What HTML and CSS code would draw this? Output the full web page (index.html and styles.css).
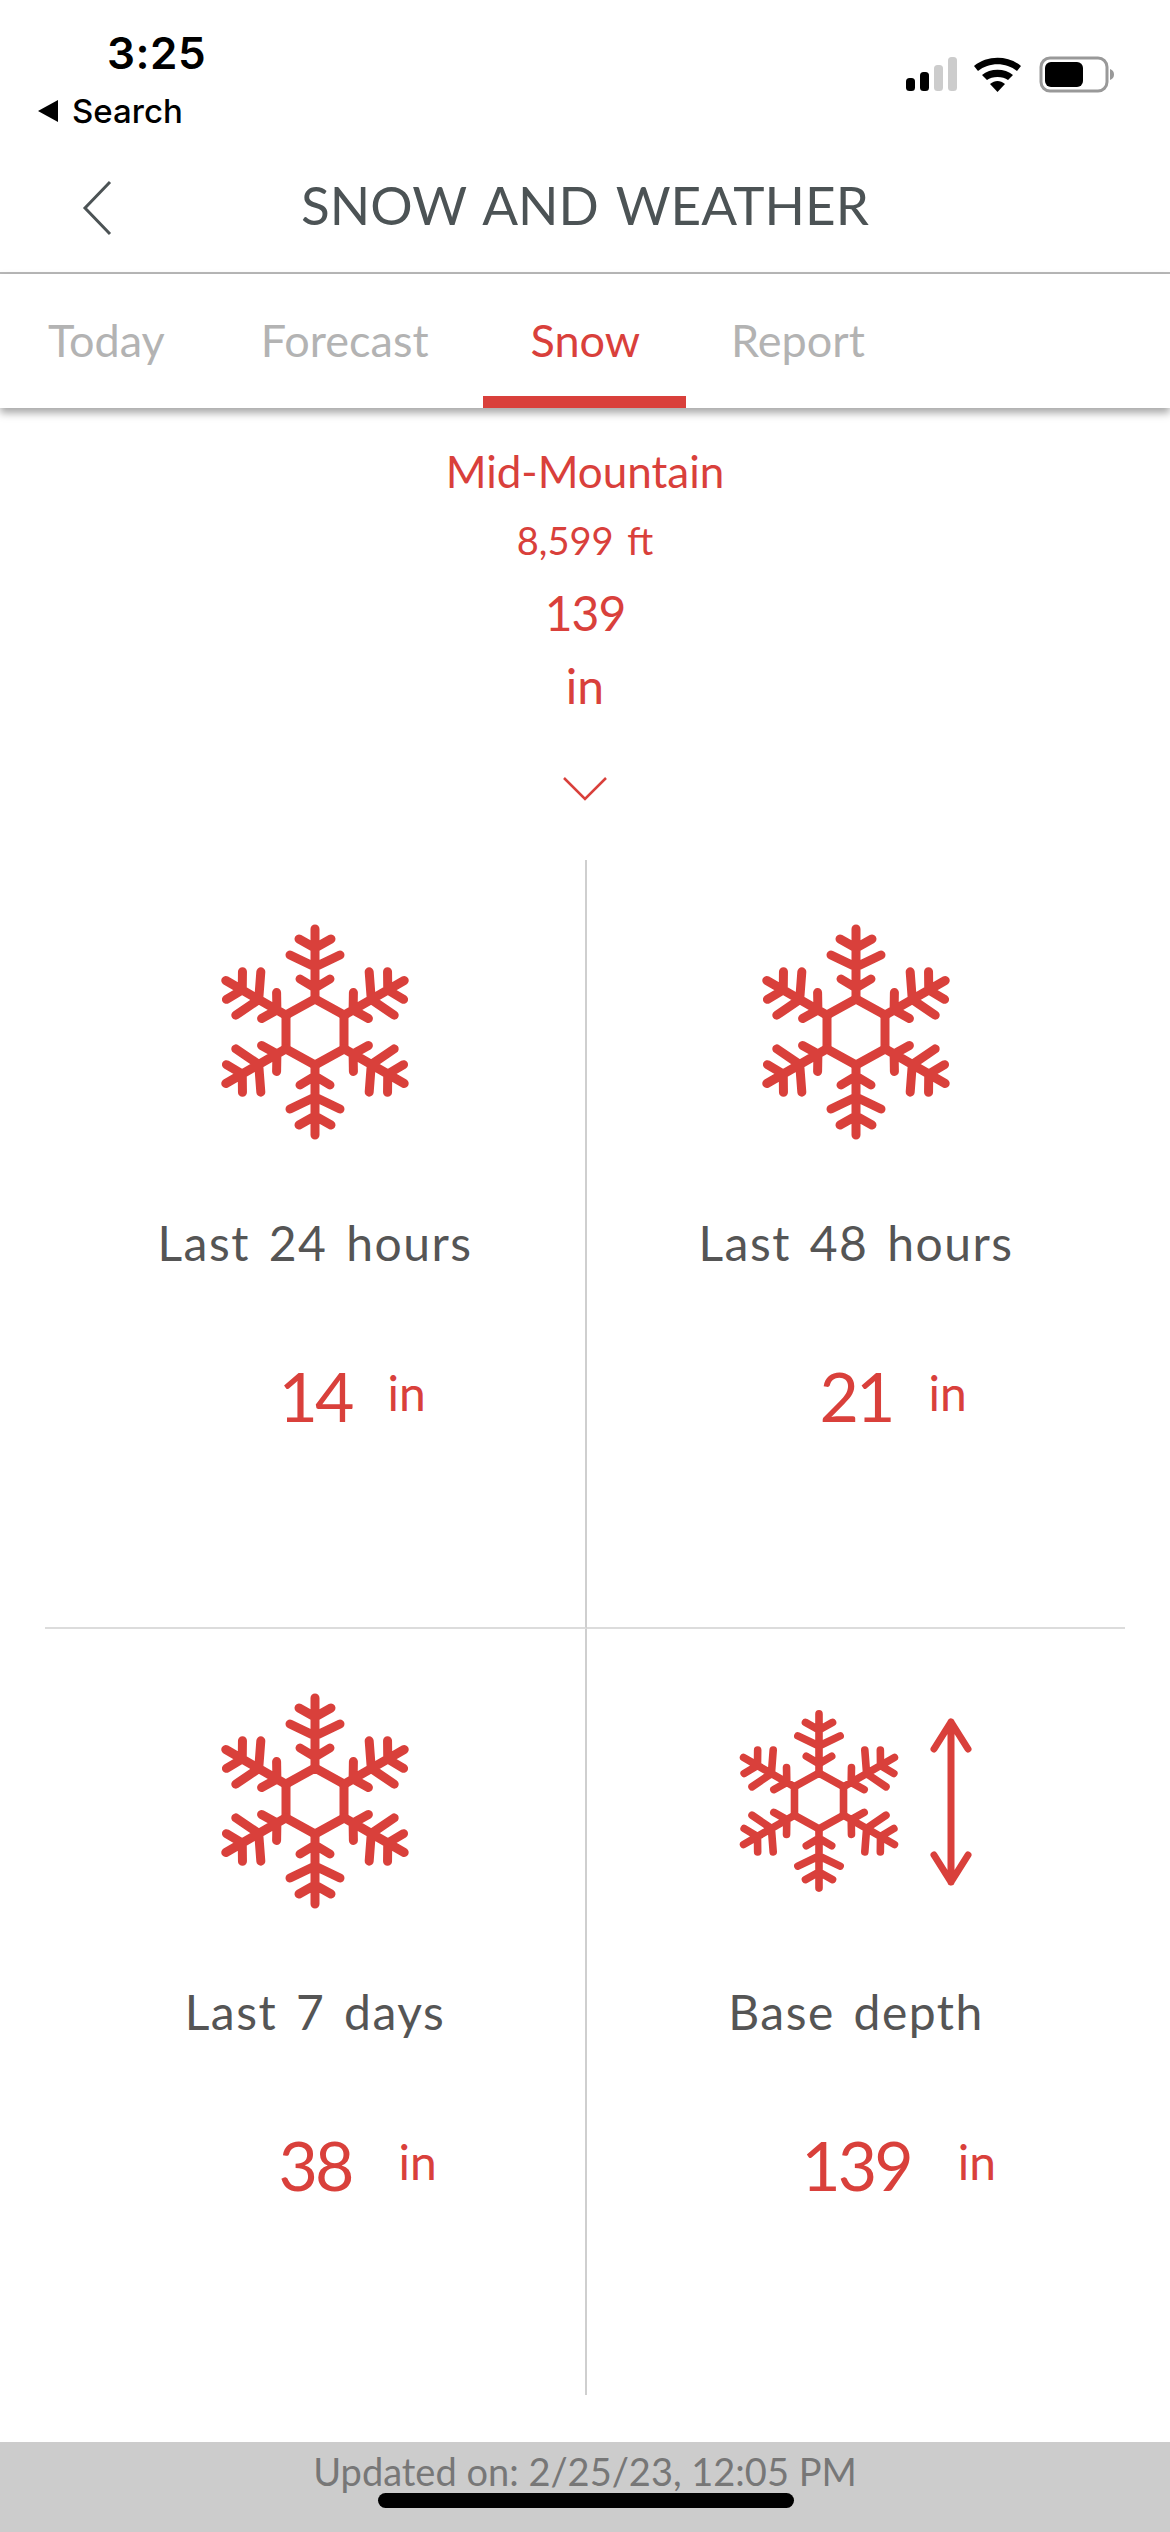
FILE: index.html
```html
<!DOCTYPE html>
<html lang="en">
<head>
<meta charset="utf-8">
<title>Snow and Weather</title>
<link rel="stylesheet" href="styles.css">
</head>
<body>
<svg class="defs" width="0" height="0" aria-hidden="true">
  <defs>
    <g id="arm">
      <path d="M0 -33V-103M-15 -53L0 -44L15 -53M-25 -77L0 -65L25 -77M-16 -93L0 -84L16 -93"/>
    </g>
    <symbol id="flake" viewBox="-110 -110 220 220">
      <g fill="none" stroke="#d9403b" stroke-width="9" stroke-linecap="round" stroke-linejoin="round">
        <path d="M0 -33L29 -17V17L0 33L-29 17V-17Z" stroke-linecap="butt"/>
        <use href="#arm"/>
        <use href="#arm" transform="rotate(60)"/>
        <use href="#arm" transform="rotate(120)"/>
        <use href="#arm" transform="rotate(180)"/>
        <use href="#arm" transform="rotate(240)"/>
        <use href="#arm" transform="rotate(300)"/>
      </g>
    </symbol>
  </defs>
</svg>
<div class="page">
  <div class="status">
    <div class="status-left">
      <div class="time">3:25</div>
      <div class="back-app"><span class="tri"></span>Search</div>
    </div>
    <svg class="status-icons" width="212" height="40" viewBox="0 0 212 40">
      <rect x="1" y="22" width="9" height="13" rx="3.5" fill="#000"/>
      <rect x="15" y="16" width="9" height="19" rx="3.5" fill="#000"/>
      <rect x="29" y="9" width="9" height="26" rx="3.5" fill="#ccc"/>
      <rect x="43" y="1" width="9" height="34" rx="3.5" fill="#ccc"/>
      <path d="M69 10C82 -1 103 -1 116 10L112 15C101 6 84 6 73 15Z" fill="#000"/>
      <path d="M77 19C85 12 100 12 108 19L103 24C98 20 87 20 82 24Z" fill="#000"/>
      <path d="M85 28C90 24 95 24 100 28L92.500 36Z" fill="#000"/>
      <rect x="136" y="2" width="66" height="33" rx="9" fill="none" stroke="#999" stroke-width="3"/>
      <rect x="140" y="6" width="38" height="25" rx="6" fill="#000"/>
      <path d="M205 13C208 14 209 16 209 18.500C209 21 208 23 205 24Z" fill="#999"/>
    </svg>
  </div>

  <header class="nav">
    <svg class="nav-back" width="30" height="56" viewBox="0 0 30 56"><path d="M28 2L3 28L28 54" fill="none" stroke="#4c5355" stroke-width="3"/></svg>
    <h1 class="nav-title">SNOW AND WEATHER</h1>
  </header>

  <nav class="tabs">
    <a class="tab">Today</a>
    <a class="tab">Forecast</a>
    <a class="tab tab-active">Snow</a>
    <a class="tab">Report</a>
  </nav>

  <section class="summary">
    <div class="sum-name">Mid-Mountain</div>
    <div class="sum-elev">8,599 ft</div>
    <div class="sum-val sum-num">139</div>
    <div class="sum-val">in</div>
    <svg class="chevron" width="46" height="26" viewBox="0 0 46 26"><path d="M2 2L23 23L44 2" fill="none" stroke="#d9403b" stroke-width="2.500"/></svg>
  </section>

  <section class="grid">
    <div class="cell">
      <svg class="flake"><use href="#flake"/></svg>
      <div class="label">Last 24 hours</div>
      <div class="value"><span class="num">14<span class="unit">in</span></span></div>
    </div>
    <div class="cell">
      <svg class="flake"><use href="#flake"/></svg>
      <div class="label">Last 48 hours</div>
      <div class="value"><span class="num">21<span class="unit">in</span></span></div>
    </div>
    <div class="cell">
      <svg class="flake"><use href="#flake"/></svg>
      <div class="label">Last 7 days</div>
      <div class="value"><span class="num">38<span class="unit unit-wide">in</span></span></div>
    </div>
    <div class="cell">
      <svg class="flake-wide" viewBox="0 0 300 220">
        <use href="#flake" x="20" y="17" width="186" height="186"/>
        <path d="M245 31V191M228 58L245 31L262 58M228 164L245 191L262 164" fill="none" stroke="#d9403b" stroke-width="7" stroke-linecap="round" stroke-linejoin="round"/>
      </svg>
      <div class="label">Base depth</div>
      <div class="value"><span class="num">139<span class="unit unit-wide">in</span></span></div>
    </div>
  </section>

  <footer class="updated">Updated on: 2/25/23, 12:05 PM</footer>
  <div class="home-bar"></div>
</div>
</body>
</html>
```
FILE: styles.css
```css
* { box-sizing: border-box; }
html, body { margin: 0; padding: 0; background: #fff; }
body { font-family: "Lato", "Noto Sans", sans-serif; }
.defs { position: absolute; }
.page { position: relative; width: 1170px; height: 2532px; overflow: hidden; display: flex; flex-direction: column; background: #fff; }

.status { height: 146px; display: flex; justify-content: space-between; align-items: flex-start; color: #000; font-family: "Inter", "Liberation Sans", sans-serif; }
.status-left { padding: 26px 0 0 36px; }
.time { font-size: 44px; line-height: 54px; font-weight: 600; margin-left: 71px; letter-spacing: 0.5px; }
.back-app { display: flex; align-items: center; font-size: 33px; line-height: 40px; font-weight: 500; margin-top: 11px; }
.tri { width: 0; height: 0; border-style: solid; border-width: 11px 20px 11px 0; border-color: transparent #000 transparent transparent; margin-right: 14px; margin-left: 2px; }
.status-icons { margin: 56px 53px 0 0; }

.nav { height: 128px; display: flex; align-items: center; justify-content: center; position: relative; border-bottom: 2px solid #b9b9b9; }
.nav-back { position: absolute; left: 82px; top: 34px; }
.nav-title { margin: 0 0 10px; font-size: 53px; font-weight: 400; color: #4c5355; word-spacing: 4px; }

.tabs { height: 134px; display: flex; background: #fff; box-shadow: 0 5px 8px rgba(0,0,0,.35); position: relative; }
.tab { padding: 0 48px; font-size: 45px; line-height: 132px; color: #b3b3b3; height: 134px; }
.tab-active { color: #d9403b; border-bottom: 12px solid #d9403b; margin: 0 -3px 0 6px; padding: 0 46px 0 48px; }

.summary { display: flex; flex-direction: column; align-items: center; color: #d9403b; height: 452px; padding-top: 36px; }
.sum-name { font-size: 44px; line-height: 54px; }
.sum-elev { font-size: 38px; line-height: 54px; margin-top: 15px; word-spacing: 4px; }
.sum-val { font-size: 48px; line-height: 54px; margin-top: 19px; }
.sum-num { letter-spacing: -1px; }
.chevron { margin-top: 63px; }

.grid { width: 1080px; margin-left: 45px; display: grid; grid-template-columns: 542px 538px; grid-template-rows: 769px 766px; }
.cell { display: flex; flex-direction: column; align-items: center; padding-top: 62px; }
.cell:nth-child(odd) { border-right: 2px solid #cfcfcf; }
.cell:nth-child(-n+2) { border-bottom: 2px solid #dcdcdc; }
.flake { width: 220px; height: 220px; display: block; }
.flake-wide { width: 300px; height: 220px; display: block; }
.label { font-size: 48px; line-height: 60px; color: #555; margin-top: 71px; letter-spacing: 1.5px; word-spacing: 5px; }
.value { margin-top: 81px; color: #d9403b; line-height: 84px; font-size: 68px; letter-spacing: -3px; }
.num { position: relative; display: inline-block; }
.unit { position: absolute; left: 100%; top: -3px; margin-left: 36px; font-size: 48px; letter-spacing: 0; }
.unit-wide { margin-left: 47px; }

.updated { margin-top: 47px; height: 90px; background: #ccc; color: #777; text-align: center; font-size: 38px; line-height: 44px; padding-top: 7px; }
.home-bar { position: absolute; left: 378px; top: 2493px; width: 416px; height: 15px; border-radius: 8px; background: #000; }
```
